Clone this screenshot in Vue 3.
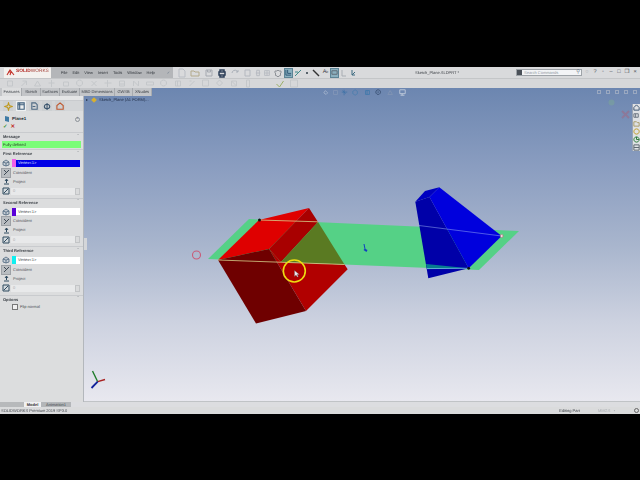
<script setup>
const menus = ['File', 'Edit', 'View', 'Insert', 'Tools', 'Window', 'Help']
const tabs = [
  { t: 'Features', w: 20 }, { t: 'Sketch', w: 19 }, { t: 'Surfaces', w: 19 }, { t: 'Evaluate', w: 20 },
  { t: 'MBD Dimensions', w: 35 }, { t: 'GWSB', w: 18 }, { t: 'XNudes', w: 19 }
]

const topIcons = [
  { w: 13, c: '#b9bdc4', d: 'M2 1h4l2 2v6H2z' },
  { w: 14, c: '#b3aa8c', d: 'M1 3h3l1 1h4v4H1z' },
  { w: 13, c: '#a5a9b0', d: 'M2 2h6v6H2zM3.5 2v2h3V2' },
  { w: 13, c: '#2d3f58', d: 'M2 4h6v3H2zM3 4V2h4v2M3 7v2h4V7', fat: true },
  { w: 13, c: '#aab0b8', d: 'M2 5a3 3 0 0 1 5-2l1 1M8 2v2H6' },
  { w: 13, c: '#b4b8bf', d: 'M2 2h5v6H2z' },
  { w: 9, c: '#b4b8bf', d: 'M3 2h3v6H3zM2 5h5' },
  { w: 8, c: '#b4b8bf', d: 'M2 2h6v6H2zM5 2v6M2 5h6' },
  { w: 13, c: '#8d9197', d: 'M5 2l1 1h2v2l-1 1 1 1-2 1-1 1-1-1-2-1 1-1-1-1V3h2z' }
]

const secondIcons = [
  'M2 2h5v5H2z', 'M2 7L7 2M3 2h4v4', 'M1 7l3-5 3 5z', 'M4 1v7M1 4h6', 'M2 3h5v4H2z', 'M4 1a3 3 0 1 0 .1 0',
  'M2 2l5 5M7 2L2 7', 'M1 4h7M4 1v7', 'M2 2h5v5H2zM2 5h5', 'M2 7V2l5 5V2', 'M1 3h7v3H1z', 'M4 1a3 3 0 1 0 .1 0',
  'M2 2h5v5H2zM4 2v5', 'M2 7l5-5M2 2h2', 'M1 1h6v6H1z', 'M1 4l3-3 3 3-3 3z', 'M2 2h5v5H2zM2 2l5 5', 'M3 1h3v7H3z'
]

const viewIcons = [
  { w: 9, c: '#a9b7cf', d: 'M1 5l2-3 3 3-2 2z' },
  { w: 9, c: '#8698b8', d: 'M2 2h5v5H2z' },
  { w: 9, c: '#3f72a8', d: 'M4 1v7M1 4h7M2 2l4 4' },
  { w: 12, c: '#4b7eae', d: 'M4 1l3 2v3L4 8 1 6V3z' },
  { w: 12, c: '#3d78ab', d: 'M2 2h5v5H2zM4 2v5' },
  { w: 11, c: '#334a6c', d: 'M4 1a3 3 0 1 0 .1 0M4 3v2' },
  { w: 13, c: '#8495b4', d: 'M1 7l3-5 3 5z' },
  { w: 10, c: '#ccd4e2', d: 'M1 1h7v5H1zM4 6v2M2 8h5' }
]

const paneIcons = [
  { c: '#c09a20', d: 'M5 1l1 3 3 1-3 1-1 3-1-3-3-1 3-1z' },
  { c: '#3f5f7c', d: 'M1 1h7v7H1zM3 1v7M1 3h7' },
  { c: '#4f6a84', d: 'M2 1h4l2 2v5H2zM3 5h3' },
  { c: '#3c566f', d: 'M4.5 1v8M1.5 5a3 2.5 0 1 0 6 0a3 2.5 0 1 0-6 0' },
  { c: '#c0562c', d: 'M4.5 1L8 4v4H1V4z' }
]

const groups = [
  { title: 'First Reference', swatch: '#f060e8', active: true, value: 'Vertex<1>', field: '0' },
  { title: 'Second Reference', swatch: '#5a00d8', active: false, value: 'Vertex<1>', field: '0' },
  { title: 'Third Reference', swatch: '#10f0f0', active: false, value: 'Vertex<1>', field: '0' }
]

const taskIcons = [
  { c: '#3f5673', d: 'M1 4l3-3 3 3v3H1z' },
  { c: '#6b7480', d: 'M1 2h5v4H1zM3 2v4' },
  { c: '#a89a6a', d: 'M1 2h3l1 1h2v4H1z' },
  { c: '#c29b24', d: 'M4 1a3 3 0 1 0 .1 0' },
  { c: '#2d7b3a', d: 'M4 1a3 3 0 1 0 .1 0M4 1v3h3' },
  { c: '#5c6670', d: 'M1 1h6v6H1zM1 4h6' }
]
</script>

<template>
  <div class="stage">
    <div class="bar"></div>
    <div class="window">
      <header class="menubar">
        <div class="logo">
          <svg class="ds" width="9" height="7" viewBox="0 0 9 7"><path d="M1 6L4 1l4 5M2 3h3l-1 3" fill="none" stroke="#c3342b" stroke-width="1.1" /></svg>
          <b>SOLID</b><span class="works">WORKS</span>
        </div>
        <nav class="menus">
          <span v-for="m in menus" :key="m">{{ m }}</span>
          <span class="pin">&#10003;</span>
        </nav>
        <div class="quick">
          <span v-for="(ic, i) in topIcons" :key="i" class="slot" :style="{ width: ic.w + 'px' }">
            <svg width="10" height="10" viewBox="0 0 10 10"><path :d="ic.d" fill="none" :stroke="ic.c" :stroke-width="ic.fat ? 1.5 : 1" /></svg>
          </span>
          <span class="hl"><svg width="8" height="8" viewBox="0 0 8 8"><path d="M1 1v6h6M3 1v4h4" fill="none" stroke="#274f6f" /></svg></span>
          <span class="slot s10"><svg width="8" height="8" viewBox="0 0 8 8"><path d="M1 7l6-6M1 3h3" stroke="#3f8a8a" fill="none" /></svg></span>
          <span class="slot s8"><i class="dot"></i></span>
          <span class="slot s10"><svg width="8" height="8" viewBox="0 0 8 8"><path d="M1 1l6 6" stroke="#333" stroke-width="1.4" /></svg></span>
          <span class="slot s9 letter">A<sub>b</sub></span>
          <span class="hl"><svg width="8" height="8" viewBox="0 0 8 8"><path d="M1 2h6v4H1z" fill="none" stroke="#5b6570" /></svg></span>
          <span class="slot s9"><svg width="8" height="8" viewBox="0 0 8 8"><path d="M2 1v6h4" stroke="#a8adb3" fill="none" /></svg></span>
          <span class="slot s9"><svg width="8" height="8" viewBox="0 0 8 8"><path d="M3 1v5h3M3 6l3-3" stroke="#3d6b80" fill="none" /></svg></span>
        </div>
        <div class="doc">Sketch_Plane.SLDPRT *</div>
        <div class="search"><i class="search-ic"></i><span>Search Commands</span><em>&#9906;</em></div>
        <div class="winbtns">
          <span class="faint">&#9675;</span><span>?</span><span class="faint">&#8226;</span><span>&#8211;</span><span>&#9633;</span><span>&#10064;</span><span>&#215;</span>
        </div>
      </header>

      <div class="toolbar">
        <svg v-for="(d, i) in secondIcons" :key="i" width="10" height="9" viewBox="0 0 9 9"><path :d="d" fill="none" stroke="#c4c7ca" /></svg>
        <svg class="tb-end" width="10" height="9" viewBox="0 0 9 9"><path d="M1 5l3 3 4-6" fill="none" stroke="#9cb06a" /></svg>
        <svg width="10" height="9" viewBox="0 0 9 9"><path d="M1 1h7v7H1z" fill="none" stroke="#c4c7ca" /></svg>
      </div>

      <main class="main">
        <aside class="pane">
          <div class="handle-strip"></div>
          <div class="pane-tabs">
            <span v-for="(ic, i) in paneIcons" :key="i" class="pane-tab" :class="{ on: i === 1 }">
              <svg width="9" height="9" viewBox="0 0 10 10"><path :d="ic.d" fill="none" :stroke="ic.c" stroke-width="1.2" /></svg>
            </span>
          </div>
          <div class="title">
            <svg width="6" height="8" viewBox="0 0 6 8"><path d="M1 1l4 1v5L1 6z" fill="#3f7ba5" /></svg>
            <b>Plane1</b>
            <span class="info">i</span>
          </div>
          <div class="actions"><span class="ok">&#10003;</span><span class="no">&#10005;</span></div>
          <div class="sec"><b>Message</b><span>&#710;</span></div>
          <div class="msg">Fully defined</div>
          <section v-for="g in groups" :key="g.title" class="group">
            <div class="sec"><b>{{ g.title }}</b><span>&#710;</span></div>
            <div class="ref">
              <svg class="ic" width="8" height="8" viewBox="0 0 8 8"><path d="M4 1l3 2v3L4 7 1 6V3zM1 3l3 1 3-1M4 4v3" fill="#c4ccd4" stroke="#3f5a74" stroke-width=".7" /></svg>
              <i class="swatch" :style="{ background: g.swatch }"></i>
              <span class="val" :class="{ active: g.active }">{{ g.value }}</span>
            </div>
            <div class="opt on-opt">
              <span class="opt-ic boxed"><svg width="7" height="7" viewBox="0 0 7 7"><path d="M1 6l5-5M1 1l2 2" stroke="#3f4a55" fill="none" /></svg></span>Coincident
            </div>
            <div class="opt">
              <span class="opt-ic"><svg width="7" height="7" viewBox="0 0 7 7"><path d="M3.5 1v4M1 6h5M2 3l1.5-2L5 3" stroke="#2f4a5f" fill="none" /></svg></span>Project
            </div>
            <div class="dist">
              <svg class="ic" width="8" height="8" viewBox="0 0 8 8"><path d="M1 1h6v6H1z" fill="#d4dade" stroke="#2f4a5f" /><path d="M2 6l4-4" stroke="#2f4a5f" /></svg>
              <span class="num">{{ g.field }}</span>
              <span class="spin"></span>
            </div>
          </section>
          <div class="sec opts"><b>Options</b><span>&#710;</span></div>
          <label class="flip"><i class="chk"></i>Flip normal</label>
        </aside>

        <section class="view">
          <svg class="scene" width="557" height="314" viewBox="83 88 557 314">
            <polygon points="207,259 248,219 518,231 478,270" fill="#55d186" />
            <polygon points="414.3,201.7 424,191 438.3,187.3 428.5,197" fill="#0000c0" />
            <polygon points="414.3,201.7 428.5,197 467.7,268.3 427.3,278.3" fill="#0000a8" />
            <polygon points="428.5,197 438.3,187.3 500.7,236 467.7,268.3" fill="#0000dd" />
            <polygon points="425,264 467.7,268.3 426,269" fill="#067c90" />
            <path d="M418 225.5L500.7 236" stroke="#9fb6f5" stroke-width=".7" opacity=".7" fill="none" />
            <path d="M426 268.6L467.7 268.3" stroke="#9fe0ff" stroke-width=".6" fill="none" />
            <circle cx="467.7" cy="268.3" r="1.4" fill="#111" />
            <circle cx="500.7" cy="236" r="1.4" fill="#eee" stroke="#c85a70" stroke-width=".6" />

            <polygon points="217,260 258,220 308,208 268,249" fill="#df0000" />
            <polygon points="268,249 308,208 317,222 280,262" fill="#a80000" />
            <polygon points="280,262 343.5,264.5 346.7,269.3 305,311 268,249" fill="#b10000" />
            <polygon points="317,222 343.5,264.5 280,262" fill="#5a7a22" />
            <polygon points="217,260 268,249 305,311 255,323.5" fill="#6f0000" />
            <path d="M258 220L317 221.8M217 260L343.5 264.5" stroke="#d6cf8a" stroke-width=".8" fill="none" />
            <circle cx="258.5" cy="220" r="1.5" fill="#111" />
            <circle cx="195.5" cy="255" r="4" fill="none" stroke="#c95b78" stroke-width="1.1" />
            <circle cx="293.3" cy="271" r="11" fill="none" stroke="#eedb10" stroke-width="1.6" />
            <path d="M293.5 270.5v6l1.5-1.4 1.3 2 1-.5-1.2-2h2.2z" fill="#e8e8f0" stroke="#555" stroke-width=".3" />
            <path d="M362.5 244l1 5-1 1 3 2 1-2-2-1-1-5z" fill="#1040c0" />

            <path d="M96.7 381.7L91.5 371" stroke="#1e7c2a" stroke-width="1.4" />
            <path d="M96.7 381.7L104 379.5" stroke="#a82020" stroke-width="1.4" />
            <path d="M96.7 381.7L90.5 388" stroke="#10209a" stroke-width="1.8" />
            <circle cx="610.5" cy="102.5" r="3" fill="#7fae8f" opacity=".4" />
            <path d="M621 111l7 7M628 111l-7 7" stroke="#b05a72" stroke-width="2" opacity=".4" />
          </svg>

          <div class="tree"><span class="arrow">&#9656;</span><i class="part"></i><span>Sketch_Plane (A1 FORM)...</span></div>

          <div class="heads">
            <span v-for="(ic, i) in viewIcons" :key="i" class="slot" :style="{ width: ic.w + 'px' }">
              <svg width="7" height="7" viewBox="0 0 9 9"><path :d="ic.d" fill="none" :stroke="ic.c" /></svg>
            </span>
          </div>
          <div class="vctl"><i></i><i></i><i></i><i></i><i></i></div>

          <div class="task">
            <span v-for="(ic, i) in taskIcons" :key="i">
              <svg width="7" height="7" viewBox="0 0 8 8"><path :d="ic.d" fill="none" :stroke="ic.c" stroke-width="1.1" /></svg>
            </span>
          </div>
          <div class="handle"></div>
        </section>

        <div class="cmtabs">
          <span v-for="(t, i) in tabs" :key="t.t" :class="{ cur: i === 0 }" :style="{ width: t.w + 'px' }">{{ t.t }}</span>
        </div>
      </main>

      <div class="doctabs">
        <span class="nav"></span><span class="model">Model</span><span class="anim">Animation1</span>
      </div>
      <footer class="status">
        <span>SOLIDWORKS Premium 2019 SP3.0</span>
        <span class="edit">Editing Part</span>
        <span class="mmgs">MMGS &nbsp; &#8226;</span>
        <i class="st-ic"></i>
      </footer>
    </div>
    <div class="bar rest"></div>
  </div>
</template>

<style scoped>
.stage { width: 640px; height: 480px; background: #000; display: flex; flex-direction: column; overflow: hidden; font-family: "Liberation Sans", Arial, sans-serif; color: #3c4046; text-rendering: geometricPrecision; }
.bar { height: 67px; background: #000; flex: none; }
.bar.rest { height: 66px; }
.window { height: 347px; flex: none; display: flex; flex-direction: column; font-size: 4px; line-height: 1; background: #dcddde; white-space: nowrap; }

.menubar { height: 11px; flex: none; display: flex; align-items: center; background: #d9dadc; position: relative; }
.logo { width: 47px; height: 10px; margin-left: 4px; background: #f3f1ee; display: flex; align-items: center; padding-left: 2px; box-sizing: border-box; font-size: 4.8px; color: #b32a24; flex: none; filter: blur(.35px); }
.logo .ds { margin-right: 1px; flex: none; }
.logo .works { color: #a8473f; }
.menus { width: 122px; height: 11px; background: #b4b6b9; display: flex; align-items: center; gap: 5px; padding-left: 10px; box-sizing: border-box; flex: none; color: #30343a; filter: blur(.25px); }
.menus .pin { margin-left: 7px; color: #6e7c8c; }
.quick { display: flex; align-items: center; margin-left: 2px; flex: none; }
.slot { display: flex; justify-content: center; align-items: center; height: 10px; flex: none; }
.s8 { width: 8px; } .s9 { width: 9px; } .s10 { width: 10px; }
.hl { width: 9px; height: 10px; background: #8ab0bf; border: 1px solid #5d8496; box-sizing: border-box; display: flex; align-items: center; justify-content: center; flex: none; }
.hl svg { width: 7px; height: 7px; }
.dot { width: 2px; height: 2px; border-radius: 50%; background: #2e3b46; }
.letter { font-size: 5.5px; color: #3a4048; }
.letter sub { font-size: 3.5px; }
.doc { position: absolute; left: 415px; top: 3.5px; color: #3c4046; filter: blur(.25px); }
.search { position: absolute; left: 516px; top: 2px; width: 66px; height: 7px; background: #f3f4f6; border: 1px solid #9ea3a8; box-sizing: border-box; display: flex; align-items: center; color: #8e96a0; }
.search-ic { width: 5px; height: 5px; background: #4a5058; margin-right: 2px; flex: none; }
.search em { margin-left: auto; margin-right: 1px; font-style: normal; color: #5a6a80; font-size: 5px; }
.winbtns { position: absolute; left: 583px; top: 2.5px; display: flex; font-size: 5.5px; color: #454a50; }
.winbtns span { width: 8px; text-align: center; }
.winbtns .faint { color: #a7abb0; }

.toolbar { height: 10px; flex: none; display: flex; align-items: center; gap: 4px; padding-left: 5px; background: #d6d7d9; border-top: 1px solid #c4c6c8; box-sizing: border-box; }
.tb-end { margin-left: 18px; }

.main { height: 314px; flex: none; display: flex; position: relative; }
.pane { width: 83px; flex: none; padding-top: 8px; background: #dcddde; border-right: 1px solid #b3b7bc; box-sizing: content-box; color: #43484e; }
.handle-strip { height: 5px; background: #e4e5e6; border-bottom: 1px solid #c9cbce; box-sizing: border-box; }
.pane-tabs { height: 10px; display: flex; align-items: center; gap: 3px; padding-left: 3px; background: #d3d5d7; }
.pane-tab { width: 10px; height: 10px; display: flex; align-items: center; justify-content: center; background: #cdd0d2; }
.pane-tab.on { background: #eef0f1; }
.title { height: 12px; margin-top: 2px; display: flex; align-items: center; padding-left: 4px; gap: 2px; font-size: 4.4px; color: #262b31; box-sizing: border-box; }
.title .info { margin-left: auto; margin-right: 3px; width: 5px; height: 5px; border: 1px solid #8c9298; border-radius: 50%; font-size: 3.5px; display: flex; align-items: center; justify-content: center; box-sizing: border-box; }
.actions { height: 9px; margin-top: -2px; display: flex; align-items: center; gap: 3px; padding-left: 3px; font-size: 5.5px; font-weight: 700; }
.ok { color: #2c8a1e; }
.no { color: #c02a20; }
.sec { height: 9px; display: flex; align-items: center; justify-content: space-between; padding: 0 4px 0 3px; border-top: 1px solid #c9cbce; box-sizing: border-box; filter: blur(.2px); }
.sec b { font-weight: 700; color: #3c4147; }
.sec span { color: #8a8f95; font-size: 5px; }
.opts { margin-top: 1px; }
.msg { height: 7px; margin: 0 2px 1px; background: #7afd78; display: flex; align-items: center; padding-left: 1px; color: #2a4628; width: 79px; box-sizing: border-box; filter: blur(.15px); }
.group { height: 46px; margin-bottom: 2.5px; display: flex; flex-direction: column; }
.ref { height: 8px; margin-top: 1px; display: flex; align-items: center; padding-left: 2px; flex: none; }
.ic { flex: none; }
.swatch { width: 4px; height: 8px; margin-left: 2px; flex: none; }
.val { width: 64px; height: 7px; background: #fff; display: flex; align-items: center; padding-left: 2px; box-sizing: border-box; color: #3a3f45; flex: none; }
.val.active { background: #0000e6; color: #dfe4ff; }
.opt { height: 9px; display: flex; align-items: center; padding-left: 2px; gap: 3px; flex: none; color: #50555b; }
.on-opt { margin-top: 1px; }
.opt-ic { width: 8px; height: 8px; display: flex; align-items: center; justify-content: center; flex: none; }
.boxed { background: #b9bdc1; outline: 1px solid #9da1a6; }
.dist { height: 8px; margin-top: 1px; display: flex; align-items: center; padding-left: 2px; flex: none; }
.num { width: 64px; height: 7px; margin-left: 1px; background: #e8e9ea; padding-left: 2px; display: flex; align-items: center; box-sizing: border-box; color: #aaa; }
.spin { width: 5px; height: 7px; background: #dadbdc; border: 1px solid #c3c5c7; box-sizing: border-box; }
.flip { height: 7px; display: flex; align-items: center; gap: 2px; padding-left: 12px; color: #484d53; }
.chk { width: 4px; height: 4px; background: #f0f0f0; border: 1px solid #777; display: block; box-sizing: content-box; }

.view { flex: 1; position: relative; background: linear-gradient(180deg, #6c86b0 0%, #8a9dc0 25%, #a8b5cd 50%, #cdd2e0 75%, #e8e8ef 100%); overflow: hidden; border-bottom: 1px solid #c0c3c6; box-sizing: border-box; }
.scene { display: block; filter: blur(.35px); }
.tree { position: absolute; left: 2px; top: 10px; display: flex; align-items: center; gap: 2px; color: #1f2c45; filter: blur(.25px); }
.arrow { font-size: 4px; margin-right: 2px; }
.part { width: 4px; height: 4px; background: #d8b030; transform: rotate(45deg); display: block; margin-right: 1px; }
.heads { position: absolute; left: 238px; top: 0; height: 9px; display: flex; align-items: center; }
.vctl { position: absolute; right: 3px; top: 2px; display: flex; gap: 5px; }
.vctl i { width: 4px; height: 4px; border: 1px solid #9aa8c0; display: block; box-sizing: border-box; }
.task { position: absolute; right: 0; top: 16px; width: 8px; height: 47px; background: #dfe1e4; border-left: 1px solid #9aa4b4; display: flex; flex-direction: column; align-items: center; gap: 0; box-sizing: border-box; }
.task span { height: 8px; display: block; }
.handle { position: absolute; left: 0; top: 150px; width: 3px; height: 12px; background: #d4d6d9; }
.cmtabs { position: absolute; left: 0; top: 0; width: 152px; height: 8px; display: flex; padding-left: 2px; box-sizing: border-box; background: #c3c5c8; color: #3c4147; filter: blur(.2px); }
.cmtabs span { display: flex; align-items: center; justify-content: center; border-right: 1px solid #a8abaf; box-sizing: border-box; flex: none; }
.cmtabs .cur { background: #dcddde; }

.doctabs { height: 5px; flex: none; display: flex; background: #dcdde0; }
.nav { width: 24px; background: #b7b9bb; }
.model { width: 17px; background: #f1f1f2; color: #333; display: flex; align-items: center; justify-content: center; font-weight: 700; }
.anim { width: 30px; background: #b3b6b9; color: #44484e; display: flex; align-items: center; justify-content: center; }
.status { height: 7px; flex: none; display: flex; align-items: center; padding-left: 1px; background: #dadbdc; color: #44484e; filter: blur(.2px); }
.edit { margin-left: 492px; color: #33373d; }
.mmgs { margin-left: 18px; color: #a8acb0; }
.st-ic { width: 5px; height: 5px; border-radius: 50%; border: 1px solid #666; margin-left: auto; margin-right: 1px; box-sizing: border-box; display: block; }
</style>
